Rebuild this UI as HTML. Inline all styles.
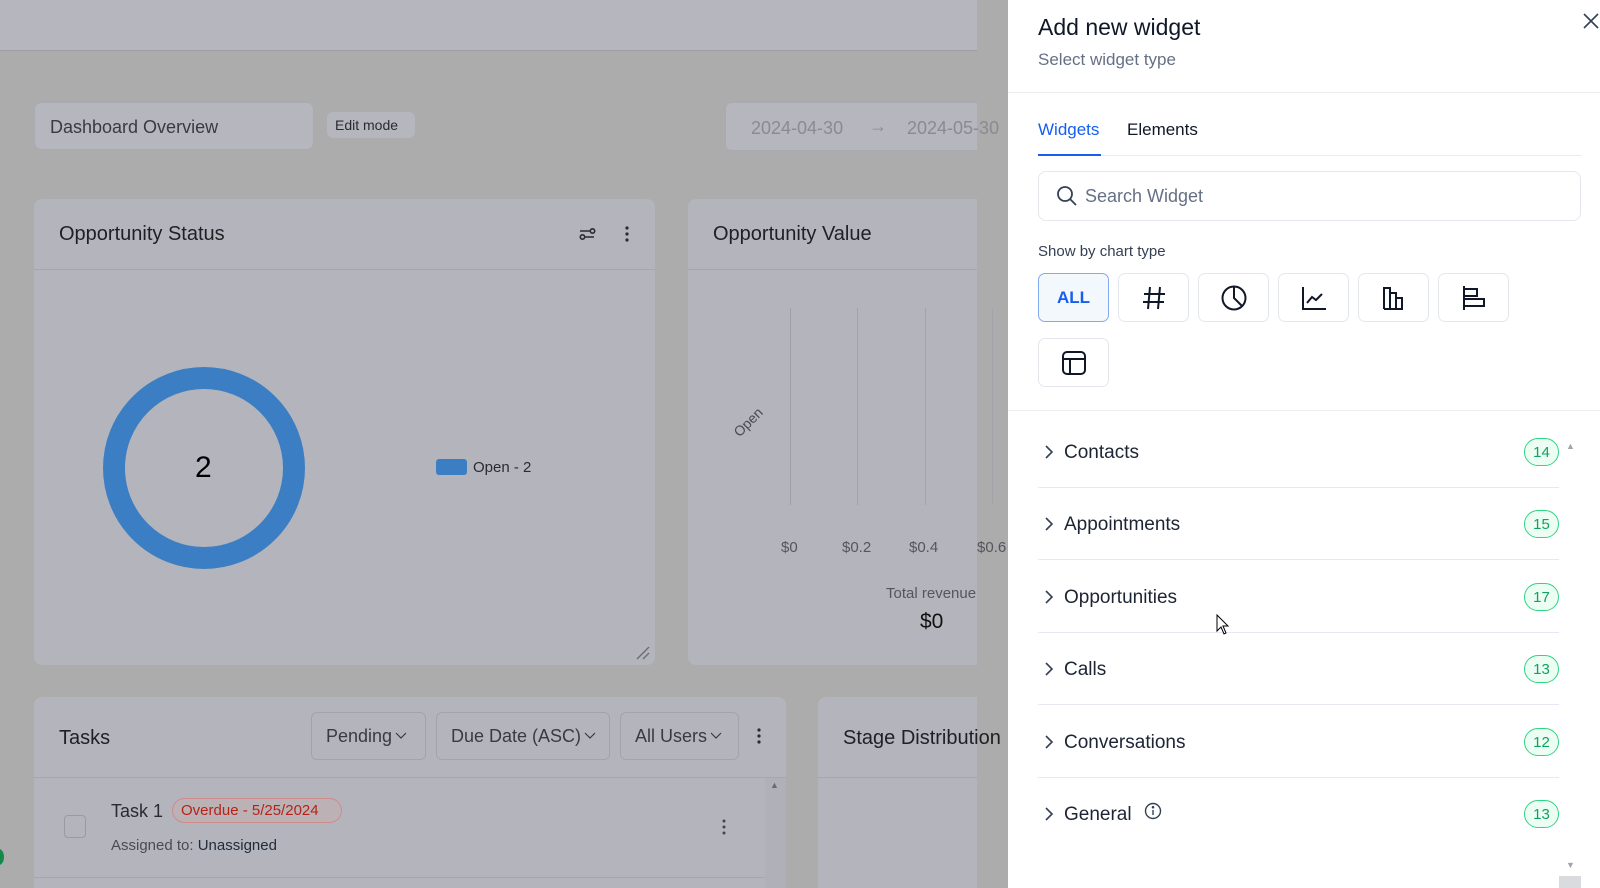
<!DOCTYPE html>
<html><head><meta charset="utf-8"><style>
*{box-sizing:border-box;margin:0;padding:0}
html{overflow:hidden;width:1600px;height:888px}
body{width:1600px;height:888px;overflow:hidden;position:relative;background:#acacac;font-family:"Liberation Sans",sans-serif;color:#1f2024}
.a{position:absolute}
.card{position:absolute;background:#b4b5bc;border-radius:8px}
.t{position:absolute;white-space:nowrap}
.dd{position:absolute;border:1px solid #a3a4ab;border-radius:6px;background:#b4b5bc;font-size:18px;color:#3a3b41;display:flex;align-items:center;padding-left:14px}
.dd svg{margin-left:3px}
.cb{position:absolute;width:71px;height:49px;border:1px solid #e4e7ec;border-radius:7px;display:flex;align-items:center;justify-content:center;background:#fff}
.row{position:absolute;left:1038px;width:521px;height:72px;border-bottom:1px solid #e6e8f5}
.row .lbl{position:absolute;left:26px;top:26px;font-size:19px;color:#1d2433}
.row .chev{position:absolute;left:6px;top:28px}
.badge{position:absolute;right:0;top:22px;width:35px;height:28px;border:1.5px solid #32d583;border-radius:14px;background:#ecfdf3;color:#12a15e;font-size:15px;display:flex;align-items:center;justify-content:center}
</style></head><body>
<!-- top bar -->
<div class="a" style="left:0;top:0;width:977px;height:51px;background:#b5b6be;border-bottom:1px solid #9d9ea5"></div>
<div class="a" style="left:977px;top:0;width:40px;height:51px;background:#acacac;border-top-left-radius:30px"></div>
<!-- header controls -->
<div class="a" style="left:34px;top:102px;width:280px;height:48px;background:#b5b6be;border-radius:7px;border:1px solid #a9aab1"></div>
<div class="t" style="left:50px;top:117px;font-size:18px;color:#3a3b41">Dashboard Overview</div>
<div class="a" style="left:327px;top:112px;width:88px;height:26px;background:#b5b6be;border-radius:6px"></div>
<div class="t" style="left:335px;top:117px;font-size:14px;color:#2a2b30">Edit mode</div>
<div class="a" style="left:725px;top:102px;width:252px;height:49px;background:#b5b6be;border-radius:6px 0 0 6px;border:1px solid #a9aab1;border-right:none"></div>
<div class="t" style="left:751px;top:118px;font-size:18px;color:#8a8b92">2024-04-30</div>
<div class="t" style="left:869px;top:116px;font-size:18px;color:#8a8b92">→</div>
<div class="t" style="left:907px;top:118px;font-size:18px;color:#8a8b92">2024-05-30</div>

<!-- Opportunity Status -->
<div class="card" style="left:34px;top:199px;width:621px;height:466px"></div>
<div class="a" style="left:34px;top:269px;width:621px;height:1px;background:#a6a7ae"></div>
<div class="t" style="left:59px;top:223px;font-size:20px">Opportunity Status</div>
<svg class="a" style="left:579px;top:226px" width="18" height="16" viewBox="0 0 18 16" fill="none" stroke="#2a2b30" stroke-width="1.6"><path d="M1 5h10M15 11H5"/><circle cx="13.5" cy="5" r="2.2"/><circle cx="3.5" cy="11" r="2.2"/></svg>
<svg class="a" style="left:624px;top:225px" width="6" height="18"><circle cx="3" cy="3" r="1.6" fill="#2a2b30"/><circle cx="3" cy="9" r="1.6" fill="#2a2b30"/><circle cx="3" cy="15" r="1.6" fill="#2a2b30"/></svg>
<svg class="a" style="left:100px;top:364px" width="208" height="208"><circle cx="104" cy="104" r="90" fill="none" stroke="#3c7ec3" stroke-width="22"/></svg>
<div class="t" style="left:195px;top:451px;font-size:30px;color:#000">2</div>
<div class="a" style="left:436px;top:459px;width:31px;height:16px;background:#3c7ec3;border-radius:3px"></div>
<div class="t" style="left:473px;top:459px;font-size:15px;color:#2a2b30">Open - 2</div>
<svg class="a" style="left:636px;top:646px" width="14" height="14" stroke="#6a6b70" stroke-width="1.3"><path d="M1 13L13 1M7 13L13 7"/></svg>

<!-- Opportunity Value -->
<div class="card" style="left:688px;top:199px;width:289px;height:466px;border-radius:8px 0 0 8px"></div>
<div class="a" style="left:688px;top:269px;width:289px;height:1px;background:#a6a7ae"></div>
<div class="t" style="left:713px;top:223px;font-size:20px">Opportunity Value</div>
<div class="a" style="left:790px;top:308px;width:1px;height:197px;background:#9fa0a6"></div>
<div class="a" style="left:857px;top:308px;width:1px;height:197px;background:#a3a4aa"></div>
<div class="a" style="left:925px;top:308px;width:1px;height:197px;background:#a3a4aa"></div>
<div class="a" style="left:992px;top:308px;width:1px;height:197px;background:#a3a4aa"></div>
<div class="t" style="left:731px;top:414px;font-size:14px;color:#4a4b52;transform:rotate(-45deg)">Open</div>
<div class="t" style="left:781px;top:539px;font-size:15px;color:#55565c">$0</div>
<div class="t" style="left:842px;top:539px;font-size:15px;color:#55565c">$0.2</div>
<div class="t" style="left:909px;top:539px;font-size:15px;color:#55565c">$0.4</div>
<div class="t" style="left:977px;top:539px;font-size:15px;color:#55565c">$0.6</div>
<div class="t" style="left:886px;top:585px;font-size:15px;color:#55565c">Total revenue</div>
<div class="t" style="left:920px;top:610px;font-size:21px;color:#111">$0</div>

<!-- Tasks -->
<div class="card" style="left:34px;top:697px;width:752px;height:200px"></div>
<div class="a" style="left:34px;top:777px;width:752px;height:1px;background:#a6a7ae"></div>
<div class="t" style="left:59px;top:727px;font-size:20px">Tasks</div>
<div class="dd" style="left:311px;top:712px;width:115px;height:48px">Pending<svg width="12" height="8" fill="none" stroke="#3a3b41" stroke-width="1.2"><path d="M1 1L6 6L11 1"/></svg></div>
<div class="dd" style="left:436px;top:712px;width:174px;height:48px">Due Date (ASC)<svg width="12" height="8" fill="none" stroke="#3a3b41" stroke-width="1.2"><path d="M1 1L6 6L11 1"/></svg></div>
<div class="dd" style="left:620px;top:712px;width:119px;height:48px">All Users<svg width="12" height="8" fill="none" stroke="#3a3b41" stroke-width="1.2"><path d="M1 1L6 6L11 1"/></svg></div>
<svg class="a" style="left:756px;top:727px" width="6" height="18"><circle cx="3" cy="3" r="1.6" fill="#2a2b30"/><circle cx="3" cy="9" r="1.6" fill="#2a2b30"/><circle cx="3" cy="15" r="1.6" fill="#2a2b30"/></svg>
<div class="a" style="left:765px;top:778px;width:21px;height:110px;background:#b0b1b8"></div>
<div class="t" style="left:770px;top:780px;font-size:9px;color:#6a6b70">▲</div>
<div class="a" style="left:64px;top:815px;width:22px;height:23px;border:1.5px solid #9a9ba1;border-radius:4px"></div>
<div class="t" style="left:111px;top:801px;font-size:18px;color:#2a2b30">Task 1</div>
<div class="a" style="left:172px;top:798px;width:170px;height:25px;border:1px solid #d08a8a;border-radius:13px;background:#bcb2b6"></div>
<div class="t" style="left:181px;top:802px;font-size:15px;color:#b42318">Overdue - 5/25/2024</div>
<div class="t" style="left:111px;top:837px;font-size:15px;color:#4a4b52">Assigned to: <span style="color:#1f2a3a">Unassigned</span></div>
<svg class="a" style="left:721px;top:818px" width="6" height="18"><circle cx="3" cy="3" r="1.5" fill="#44454a"/><circle cx="3" cy="9" r="1.5" fill="#44454a"/><circle cx="3" cy="15" r="1.5" fill="#44454a"/></svg>
<div class="a" style="left:34px;top:877px;width:731px;height:1px;background:#a6a7ae"></div>
<div class="a" style="left:-6px;top:849px;width:10px;height:16px;border-radius:50%;background:#138a4a"></div>

<!-- Stage Distribution -->
<div class="card" style="left:818px;top:697px;width:159px;height:200px;border-radius:8px 0 0 0"></div>
<div class="a" style="left:818px;top:777px;width:159px;height:1px;background:#a6a7ae"></div>
<div class="t" style="left:843px;top:727px;font-size:20px">Stage Distribution</div>

<!-- panel -->
<div class="a" style="left:1008px;top:0;width:592px;height:888px;background:#fff"></div>
<div class="t" style="left:1038px;top:14px;font-size:23px;font-weight:500;color:#101828">Add new widget</div>
<div class="t" style="left:1038px;top:50px;font-size:17px;color:#667085">Select widget type</div>
<svg class="a" style="left:1582px;top:12px" width="18" height="18" stroke="#344054" stroke-width="1.6"><path d="M2 2L16 16M16 2L2 16"/></svg>
<div class="a" style="left:1008px;top:92px;width:592px;height:1px;background:#eaecf0"></div>
<div class="t" style="left:1038px;top:120px;font-size:17px;font-weight:500;color:#155eef">Widgets</div>
<div class="t" style="left:1127px;top:120px;font-size:17px;font-weight:500;color:#101828">Elements</div>
<div class="a" style="left:1038px;top:155px;width:544px;height:1px;background:#eaecf0"></div>
<div class="a" style="left:1038px;top:154px;width:63px;height:2px;background:#155eef"></div>
<div class="a" style="left:1038px;top:171px;width:543px;height:50px;border:1px solid #e4e7ec;border-radius:8px"></div>
<svg class="a" style="left:1056px;top:185px" width="22" height="22" fill="none" stroke="#344054" stroke-width="1.8"><circle cx="9" cy="9" r="7"/><path d="M14 14L20 20"/></svg>
<div class="t" style="left:1085px;top:186px;font-size:18px;color:#667085">Search Widget</div>
<div class="t" style="left:1038px;top:243px;font-size:15px;color:#344054">Show by chart type</div>
<div class="cb" style="left:1038px;top:273px;border-color:#84a9f3;background:#f3f8fd;color:#155eef;font-weight:bold;font-size:17px">ALL</div>
<div class="cb" style="left:1118px;top:273px"><svg width="26" height="26" stroke="#101828" stroke-width="2" fill="none"><path d="M9 2L7 24M19 2L17 24M3 9H24M2 17H23"/></svg></div>
<div class="cb" style="left:1198px;top:273px"><svg width="28" height="28" stroke="#101828" stroke-width="2" fill="none"><circle cx="14" cy="14" r="11.5"/><path d="M14 2.5V14L22 22"/></svg></div>
<div class="cb" style="left:1278px;top:273px"><svg width="28" height="28" stroke="#101828" stroke-width="2" fill="none"><path d="M3 3V25H26M7 19L12 13L16 16L22 10"/></svg></div>
<div class="cb" style="left:1358px;top:273px"><svg width="28" height="28" stroke="#101828" stroke-width="2" fill="none"><path d="M4 25V4H10V25M10 25V9H16V25M16 25V14H22V25H4"/></svg></div>
<div class="cb" style="left:1438px;top:273px"><svg width="28" height="28" stroke="#101828" stroke-width="2" fill="none"><path d="M4 2V26M4 5H17V12H4M4 15H24V22H4"/></svg></div>
<div class="cb" style="left:1038px;top:338px"><svg width="28" height="28" stroke="#101828" stroke-width="2" fill="none"><rect x="3" y="3" width="22" height="22" rx="4"/><path d="M3 10H25M10 10V25"/></svg></div>
<div class="a" style="left:1008px;top:410px;width:592px;height:1px;background:#eaecf0"></div>

<div class="row" style="top:416px"><svg class="chev" width="10" height="16" stroke="#344054" stroke-width="1.6" fill="none"><path d="M2 2L8 8L2 14"/></svg><span class="lbl">Contacts</span><span class="badge">14</span></div>
<div class="row" style="top:488px"><svg class="chev" width="10" height="16" stroke="#344054" stroke-width="1.6" fill="none"><path d="M2 2L8 8L2 14"/></svg><span class="lbl">Appointments</span><span class="badge">15</span></div>
<div class="row" style="top:561px"><svg class="chev" width="10" height="16" stroke="#344054" stroke-width="1.6" fill="none"><path d="M2 2L8 8L2 14"/></svg><span class="lbl">Opportunities</span><span class="badge">17</span></div>
<div class="row" style="top:633px"><svg class="chev" width="10" height="16" stroke="#344054" stroke-width="1.6" fill="none"><path d="M2 2L8 8L2 14"/></svg><span class="lbl">Calls</span><span class="badge">13</span></div>
<div class="row" style="top:706px"><svg class="chev" width="10" height="16" stroke="#344054" stroke-width="1.6" fill="none"><path d="M2 2L8 8L2 14"/></svg><span class="lbl">Conversations</span><span class="badge">12</span></div>
<div class="row" style="top:778px;border-bottom:none"><svg class="chev" width="10" height="16" stroke="#344054" stroke-width="1.6" fill="none"><path d="M2 2L8 8L2 14"/></svg><span class="lbl">General</span><svg class="a" style="left:106px;top:24px" width="18" height="18" fill="none" stroke="#344054" stroke-width="1.4"><circle cx="9" cy="9" r="7.5"/><path d="M9 8V13"/><circle cx="9" cy="5.2" r=".6" fill="#344054"/></svg><span class="badge">13</span></div>

<div class="t" style="left:1566px;top:441px;font-size:9px;color:#a0a4ab">▲</div>
<div class="t" style="left:1566px;top:860px;font-size:9px;color:#a0a4ab">▼</div>
<div class="a" style="left:1559px;top:876px;width:22px;height:12px;background:#d9dbdf"></div>
<svg class="a" style="left:1216px;top:614px" width="14" height="22"><path d="M1 1V17L5 13L8 20L10 19L7 12H12Z" fill="#fff" stroke="#000" stroke-width="1"/></svg>
</body></html>
